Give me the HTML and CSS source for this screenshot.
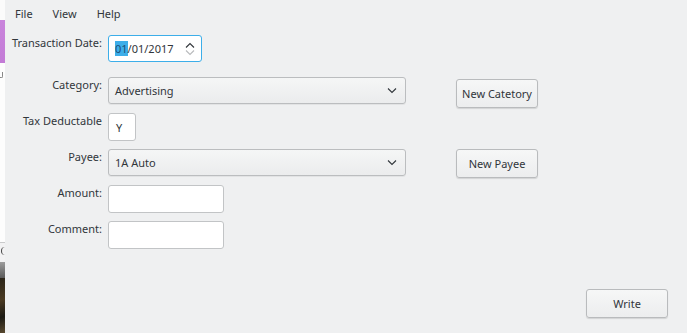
FILE: index.html
```html
<!DOCTYPE html>
<html lang="en">
<head>
    <meta charset="UTF-8">
    <title>Transaction Entry</title>
    <link rel="stylesheet" href="styles.css">
</head>
<body>
    <!-- sliver of the window underneath -->
    <div class="behind">
        <div class="behind-top"></div>
        <div class="behind-purple"></div>
        <div class="behind-white"><span class="frag frag-dot"></span></div>
        <div class="behind-bar"><span class="frag frag-arc"></span></div>
        <div class="behind-fade"></div>
        <div class="behind-photo"></div>
    </div>
    <div class="window">
        <nav class="menubar">
            <span class="menu-item">File</span>
            <span class="menu-item">View</span>
            <span class="menu-item">Help</span>
        </nav>
        <form class="form">
            <label class="label">Transaction Date:</label>
            <div class="spinbox">
                <span class="spin-text"><span class="selected">01</span>/01/2017</span>
                <span class="spin-arrows">
                    <svg width="10" height="6" viewBox="0 0 10 6"><path d="M1 5.5 L5 1.5 L9 5.5" fill="none" stroke="#31363b" stroke-width="1.1"/></svg>
                    <svg width="10" height="6" viewBox="0 0 10 6"><path d="M1 0.5 L5 4.5 L9 0.5" fill="none" stroke="#b8babc" stroke-width="1.1"/></svg>
                </span>
            </div>
            <span></span>

            <label class="label">Category:</label>
            <div class="combo combo-wide">
                <span>Advertising</span>
                <svg width="10" height="6" viewBox="0 0 10 6"><path d="M1 0.5 L5 4.5 L9 0.5" fill="none" stroke="#31363b" stroke-width="1.1"/></svg>
            </div>
            <button type="button" class="btn btn-shift">New Catetory</button>

            <label class="label">Tax Deductable</label>
            <div class="field field-tiny">Y</div>
            <span></span>

            <label class="label">Payee:</label>
            <div class="combo combo-wide">
                <span>1A Auto</span>
                <svg width="10" height="6" viewBox="0 0 10 6"><path d="M1 0.5 L5 4.5 L9 0.5" fill="none" stroke="#31363b" stroke-width="1.1"/></svg>
            </div>
            <button type="button" class="btn">New Payee</button>

            <label class="label">Amount:</label>
            <div class="field field-mid"></div>
            <span></span>

            <label class="label">Comment:</label>
            <div class="field field-mid"></div>
            <span></span>
        </form>
        <div class="footer">
            <button type="button" class="btn">Write</button>
        </div>
    </div>
</body>
</html>
```

FILE: styles.css
```css
body {
    margin: 0;
    height: 333px;
    display: flex;
    overflow: hidden;
    font-family: "Noto Sans", sans-serif;
    font-size: 11px;
    color: #31363b;
    background: #eff0f1;
}
.behind {
    width: 5px;
    display: flex;
    flex-direction: column;
    overflow: hidden;
    box-shadow: inset -1px 0 0 #e3e4e5;
}
.behind-top {
    height: 20px;
    background: #fbfbfb;
}
.behind-purple {
    height: 43px;
    background: linear-gradient(#c984dc, #c37bd6);
}
.behind-white {
    height: 179px;
    background: #fdfdfd;
    border-bottom: 1px solid #c9cacb;
}
.behind-bar {
    height: 19px;
    background: #f2f2f3;
}
.frag {
    display: block;
}
.frag-dot {
    width: 2px;
    height: 5px;
    margin-top: 9px;
    border-bottom: 1px solid #888;
    border-right: 1px solid #888;
    border-radius: 0 0 2px 0;
}
.frag-arc {
    width: 4px;
    height: 8px;
    margin: 4px 0 0 1px;
    border-left: 1px solid #444;
    border-radius: 4px 0 0 4px;
}
.behind-fade {
    height: 16px;
    background: linear-gradient(#9c9c9c, #5a5a5a);
}
.behind-photo {
    flex: 1;
    background: linear-gradient(160deg, #2a2418, #4a3a22 40%, #1c1a14 70%, #5a4a30);
}
.window {
    flex: 1;
    display: flex;
    flex-direction: column;
}
.menubar {
    display: flex;
    height: 28px;
    align-items: center;
    padding-left: 4px;
}
.menu-item {
    padding: 0 6px;
    margin-right: 8px;
    line-height: 16px;
}
.form {
    display: grid;
    grid-template-columns: 97px 348px 82px;
    grid-template-rows: 42px 36px 36px 36px 36px 36px;
    padding: 7px 0 0 6px;
    align-items: start;
}
.label {
    text-align: right;
    padding-right: 6px;
    line-height: 16px;
    white-space: nowrap;
}
.spinbox {
    height: 25px;
    border: 1px solid #3daee9;
    border-radius: 3px;
    background: #fff;
    display: flex;
    align-items: center;
    justify-content: space-between;
    padding: 0 6px;
    width: 80px;
}
.selected {
    background: #3daee9;
    color: #1e4f78;
}
.spin-arrows {
    display: flex;
    flex-direction: column;
    gap: 2px;
    margin-top: 1px;
}
.spin-arrows svg {
    display: block;
}
.combo {
    height: 25px;
    border: 1px solid #bbbdbf;
    border-radius: 3px;
    background: linear-gradient(#f5f6f6, #ebeced);
    display: flex;
    align-items: center;
    justify-content: space-between;
    padding: 0 8px 0 6px;
    box-shadow: 0 1px 0 rgba(0, 0, 0, 0.05);
}
.combo-wide {
    width: 282px;
}
.field {
    border: 1px solid #c2c4c6;
    border-radius: 3px;
    background: #fff;
    box-sizing: border-box;
    display: flex;
    align-items: center;
    padding-left: 7px;
}
.field-tiny {
    width: 28px;
    height: 28px;
}
.field-mid {
    width: 116px;
    height: 28px;
}
.btn {
    font-family: inherit;
    font-size: 11px;
    color: #31363b;
    width: 82px;
    height: 29px;
    border: 1px solid #b9bbbd;
    border-radius: 3px;
    background: linear-gradient(#f6f7f7, #ecedee);
    box-shadow: 0 1px 1px rgba(0, 0, 0, 0.12);
    padding: 0;
}
.btn-shift {
    margin-top: 2px;
}
.footer {
    margin-top: auto;
    display: flex;
    justify-content: flex-end;
    padding: 0 19px 15px 0;
}
```
